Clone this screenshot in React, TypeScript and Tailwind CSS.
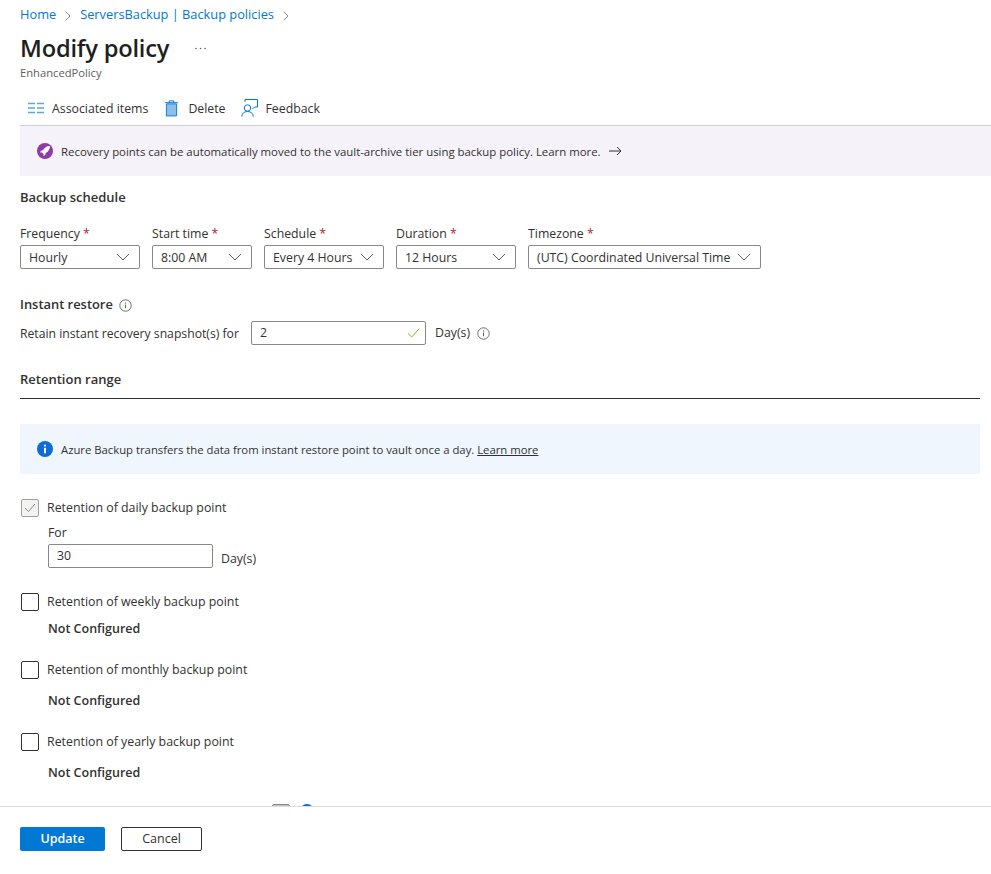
import React from "react";

const Crumb = () => (
  <svg width="8" height="12" viewBox="0 0 8 12" className="text-[#8a8886] mt-[1px]" fill="none" stroke="currentColor" strokeWidth="1">
    <path d="M1.5 1.5 6 6l-4.500 4.500" />
  </svg>
);

const Req = ({ label }: { label: string }) => (
  <div className="h-[23px] leading-[24px] text-[#323130]">
    {label} <span className="text-[#a4262c]">*</span>
  </div>
);

const Sel = ({ label, value, w }: { label: string; value: string; w: string }) => (
  <div className={w}>
    <Req label={label} />
    <div className="h-[24px] border border-[#8a8886] rounded-[2px] flex items-center justify-between pl-[8px] pr-[9px] text-[#323130]">
      <span className="whitespace-nowrap pt-[2px]">{value}</span>
      <svg width="14" height="8" viewBox="0 0 14 8" fill="none" stroke="#605e5c" strokeWidth="1" className="shrink-0">
        <path d="M1 1l6 6 6-6" />
      </svg>
    </div>
  </div>
);

const InfoO = () => (
  <svg width="13" height="13" viewBox="0 0 13 13" fill="none" className="shrink-0">
    <circle cx="6.500" cy="6.500" r="5.700" stroke="#605e5c" strokeWidth="0.9" />
    <path d="M6.500 5.600v3.600" stroke="#605e5c" strokeWidth="1" />
    <circle cx="6.500" cy="3.900" r="0.700" fill="#605e5c" />
  </svg>
);

const Retention = ({ label, mt }: { label: string; mt: string }) => (
  <div className={mt}>
    <div className="flex items-center h-[18px]">
      <div className="w-[18px] h-[18px] ml-[1px] border border-[#323130] rounded-[2px]" />
      <span className="ml-[8px] text-[12.36px]">{label}</span>
    </div>
  </div>
);

const NotConf = ({ mt }: { mt: string }) => (
  <div className={`${mt} ml-[28px] h-[18px] leading-[18px] text-[12.5px] font-semibold text-[#323130]`}>Not Configured</div>
);

export default function App() {
  return (
    <div
      className="w-[991px] h-[874px] overflow-hidden flex flex-col bg-white text-[12.3px] text-[#323130]"
      style={{ fontFamily: '"Open Sans", "Liberation Sans", sans-serif' }}
    >
      <div className="flex-1 min-h-0 overflow-hidden pl-[20px]">
        <div className="h-[30px] flex items-center text-[#0078d4] text-[12.8px]">
          <span>Home</span>
          <span className="ml-[8px]"><Crumb /></span>
          <span className="ml-[8px]">ServersBackup | Backup policies</span>
          <span className="ml-[8px]"><Crumb /></span>
        </div>
        <div className="h-[38px] flex items-center">
          <span className="text-[23.7px] font-semibold text-[#201f1e] tracking-[-0.2px]">Modify policy</span>
          <svg width="11" height="3" viewBox="0 0 11 3" fill="#605e5c" className="ml-[26px] -mt-[2px]">
            <circle cx="1" cy="1.500" r="0.800" />
            <circle cx="5.500" cy="1.500" r="0.800" />
            <circle cx="10" cy="1.500" r="0.800" />
          </svg>
        </div>
        <div className="h-[10px] flex items-center text-[11.2px] text-[#605e5c]">EnhancedPolicy</div>

        <div className="mt-[14px] h-[32px] flex items-center pl-[8px] text-[#323130]">
          <svg width="16" height="12" viewBox="0 0 16 12" fill="none" stroke="#5ca7e0" strokeWidth="1.400">
            <path d="M0 1.500h7M9 1.500h7M0 6h7M9 6h7M0 10.500h7M9 10.500h7" />
          </svg>
          <span className="ml-[8px] pt-[2px]">Associated items</span>
          <svg width="13" height="17" viewBox="0 0 14 18" fill="none" className="ml-[17px]">
            <path d="M1.500 4h11v13h-11z" fill="#8cc0ea" stroke="#0078d4" strokeWidth="1" />
            <path d="M0 2.700h14M4.500 2.700V.800h5v1.900" stroke="#0078d4" strokeWidth="1" />
          </svg>
          <span className="ml-[10px] pt-[2px]">Delete</span>
          <svg width="17" height="18" viewBox="0 0 17 18" fill="none" stroke="#0078d4" strokeWidth="1" className="ml-[15px]">
            <circle cx="6.500" cy="9" r="3.200" />
            <path d="M0.800 17.500c0-3.200 2.400-5 5.700-5s5.700 1.800 5.700 5" />
            <path d="M4 3V.500h12.500V8h-3l-2 2" />
          </svg>
          <span className="ml-[8px] pt-[2px]">Feedback</span>
        </div>

        <div className="mt-[1px] h-[51px] border-t border-[#d0d0d0] bg-[#f6f2fa] flex items-center pl-[17px]">
          <div className="w-[16px] h-[16px] rounded-full bg-[#8f3ba3] flex items-center justify-center">
            <svg width="10" height="10" viewBox="0 0 10 10" fill="#ffffff">
              <path d="M10 0C7 0 4.500 1.500 3 4.200L1 4.800 0 6.600l2-.2L3.600 8l-.2 2 1.800-1 .6-2C8.500 5.500 10 3 10 0z" />
            </svg>
          </div>
          <span className="ml-[8px] text-[11.4px] whitespace-nowrap pt-[2px]">
            Recovery points can be automatically moved to the vault-archive tier using backup policy. Learn more.
          </span>
          <svg width="13" height="10" viewBox="0 0 13 10" fill="none" stroke="#323130" strokeWidth="1" className="ml-[8px]">
            <path d="M0 5h12M8 1l4 4-4 4" />
          </svg>
        </div>

        <div className="mt-[12px] h-[18px] leading-[18px] text-[13px] font-semibold">Backup schedule</div>

        <div className="mt-[16px] flex gap-[12px] items-start">
          <Sel label="Frequency" value="Hourly" w="w-[120px]" />
          <Sel label="Start time" value="8:00 AM" w="w-[100px]" />
          <Sel label="Schedule" value="Every 4 Hours" w="w-[120px]" />
          <Sel label="Duration" value="12 Hours" w="w-[120px]" />
          <Sel label="Timezone" value="(UTC) Coordinated Universal Time" w="w-[233px]" />
        </div>

        <div className="mt-[27px] h-[18px] flex items-center gap-[6px]">
          <span className="font-semibold text-[12.9px]">Instant restore</span>
          <InfoO />
        </div>

        <div className="mt-[7px] h-[24px] flex items-center">
          <span className="w-[231px] text-[12.2px] whitespace-nowrap pt-[2px]">Retain instant recovery snapshot(s) for</span>
          <div className="w-[175px] h-[24px] border border-[#8a8886] rounded-[2px] flex items-center justify-between pl-[8px] pr-[5px]">
            <span>2</span>
            <svg width="13" height="10" viewBox="0 0 14 11" fill="none" stroke="#6bb700" strokeWidth="1">
              <path d="M1 6l4 4 8-9" />
            </svg>
          </div>
          <span className="ml-[9px]">Day(s)</span>
          <span className="ml-[7px]"><InfoO /></span>
        </div>

        <div className="mt-[25px] w-[960px] h-[29px] border-b border-[#323130] text-[13px] font-semibold">Retention range</div>

        <div className="mt-[25px] w-[960px] h-[50px] bg-[#eff6fe] flex items-center pl-[17px]">
          <svg width="16" height="16" viewBox="0 0 16 16" className="shrink-0">
            <circle cx="8" cy="8" r="8" fill="#0f6cd6" />
            <rect x="7" y="6.800" width="2" height="5.500" fill="#fff" />
            <circle cx="8" cy="4.600" r="1.100" fill="#fff" />
          </svg>
          <span className="ml-[8px] text-[11.3px] pt-[3px]">
            Azure Backup transfers the data from instant restore point to vault once a day. <span className="underline">Learn more</span>
          </span>
        </div>

        <div className="mt-[25px] flex items-center h-[18px]">
          <div className="w-[18px] h-[18px] ml-[1px] border border-[#a19f9d] rounded-[2px] bg-[#f3f2f1] flex items-center justify-center">
            <svg width="12" height="10" viewBox="0 0 12 10" fill="none" stroke="#8a8886" strokeWidth="1">
              <path d="M1 5l3.500 3.500L11 1" />
            </svg>
          </div>
          <span className="ml-[8px] text-[12.36px]">Retention of daily backup point</span>
        </div>
        <div className="ml-[28px] mt-[7px] h-[18px] leading-[18px]">For</div>
        <div className="ml-[28px] mt-[2px] flex items-center">
          <div className="w-[165px] h-[24px] border border-[#8a8886] rounded-[2px] flex items-center pl-[8px]">30</div>
          <span className="ml-[8px] mt-[6px]">Day(s)</span>
        </div>

        <Retention label="Retention of weekly backup point" mt="mt-[25px]" />
        <NotConf mt="mt-[9px]" />
        <Retention label="Retention of monthly backup point" mt="mt-[23px]" />
        <NotConf mt="mt-[13px]" />
        <Retention label="Retention of yearly backup point" mt="mt-[23px]" />
        <NotConf mt="mt-[13px]" />

        <div className="mt-[22px] ml-[252px] flex items-start gap-[10px]">
          <div className="w-[18px] h-[18px] border border-[#8a8886] rounded-[2px] bg-[#c8c6c4]" />
          <div className="w-[14px] h-[14px] rounded-full bg-[#0f6cd6]" />
        </div>
      </div>

      <div className="shrink-0 h-[68px] border-t border-[#dcdcdc] bg-white pl-[20px] pt-[20px] flex items-start gap-[16px]">
        <div className="w-[85px] h-[24px] rounded-[2px] bg-[#0078d4] text-white text-[12.5px] font-semibold flex items-center justify-center">Update</div>
        <div className="w-[81px] h-[24px] rounded-[2px] border border-[#323130] text-[12.5px] text-[#323130] flex items-center justify-center">Cancel</div>
      </div>
    </div>
  );
}
